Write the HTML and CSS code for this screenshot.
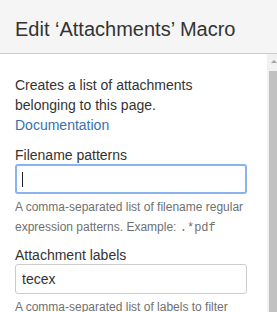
FILE: index.html
```html
<!DOCTYPE html>
<html lang="en">
  <head>
    <meta charset="UTF-8" />
    <meta name="viewport" content="width=device-width, initial-scale=1.0" />
    <title>Edit Attachments Macro</title>
    <link rel="stylesheet" href="styles.css">
  </head>
  <body>
    <div class="dialog">
      <div class="dialog-header">
        <h2>Edit &lsquo;Attachments&rsquo; Macro</h2>
      </div>
      <div class="dialog-main">
        <div class="dialog-content">
          <p class="macro-desc">
            Creates a list of attachments belonging to this page.
            <a href="#">Documentation</a>
          </p>

          <div class="field-group first">
            <label>Filename patterns</label>
            <div class="text-field focused"><span class="caret"></span></div>
            <div class="description">
              A comma-separated list of filename regular expression patterns. Example: <code>.*pdf</code>
            </div>
          </div>

          <div class="field-group">
            <label>Attachment labels</label>
            <div class="text-field">tecex</div>
            <div class="description">
              A comma-separated list of labels to filter
            </div>
          </div>
        </div>

        <div class="scrollbar">
          <div class="scroll-arrow"></div>
          <div class="scroll-thumb"></div>
        </div>
      </div>
    </div>
  </body>
</html>
```

FILE: styles.css
```css
body {
  margin: 0;
  padding: 0;
  font-family: "Liberation Sans", Arial, sans-serif;
  color: #333;
  background: #fff;
}

.dialog {
  width: 277px;
  height: 312px;
  overflow: hidden;
  display: flex;
  flex-direction: column;
}

.dialog-header {
  background: #f5f5f5;
  border-bottom: 1px solid #cccccc;
  padding: 17px 15px 12px;
}

.dialog-header h2 {
  margin: 0;
  font-size: 20px;
  line-height: 24px;
  font-weight: normal;
  color: #333;
}

.dialog-main {
  flex: 1;
  display: flex;
  min-height: 0;
}

.dialog-content {
  flex: 1;
  padding: 21px 20px 0 15px;
  overflow: hidden;
}

.macro-desc {
  margin: 0;
  font-size: 14px;
  line-height: 20px;
}

.macro-desc a {
  display: block;
  color: #3572b0;
  text-decoration: none;
}

.field-group {
  margin-top: 8px;
}

.field-group.first {
  margin-top: 11px;
}

.field-group label {
  display: block;
  font-size: 14px;
  line-height: 18px;
}

.text-field {
  box-sizing: border-box;
  height: 30px;
  width: 232px;
  border: 1px solid #cccccc;
  border-radius: 3px;
  padding: 0 6px;
  font-size: 14px;
  line-height: 28px;
  color: #333;
  display: flex;
  align-items: center;
}

.text-field.focused {
  border: 2px solid #8ab2ef;
  padding: 0 5px;
}

.caret {
  display: block;
  width: 1px;
  height: 15px;
  background: #222;
}

.description {
  margin-top: 3px;
  font-size: 12px;
  line-height: 20px;
  color: #707070;
}

.description code {
  font-family: "Liberation Mono", "DejaVu Sans Mono", monospace;
  font-size: 12px;
}

.scrollbar {
  width: 10px;
  background: #f1f1f1;
  display: flex;
  flex-direction: column;
  align-items: flex-end;
}

.scroll-arrow {
  margin: 6px 0 0;
  width: 0;
  height: 0;
  border-left: 3px solid transparent;
  border-right: 3px solid transparent;
  border-bottom: 3px solid #a3a3a3;
  align-self: center;
  transform: translateX(2px);
}

.scroll-thumb {
  margin-top: 8px;
  width: 8px;
  flex: 1;
  background: #c1c1c1;
}
```
